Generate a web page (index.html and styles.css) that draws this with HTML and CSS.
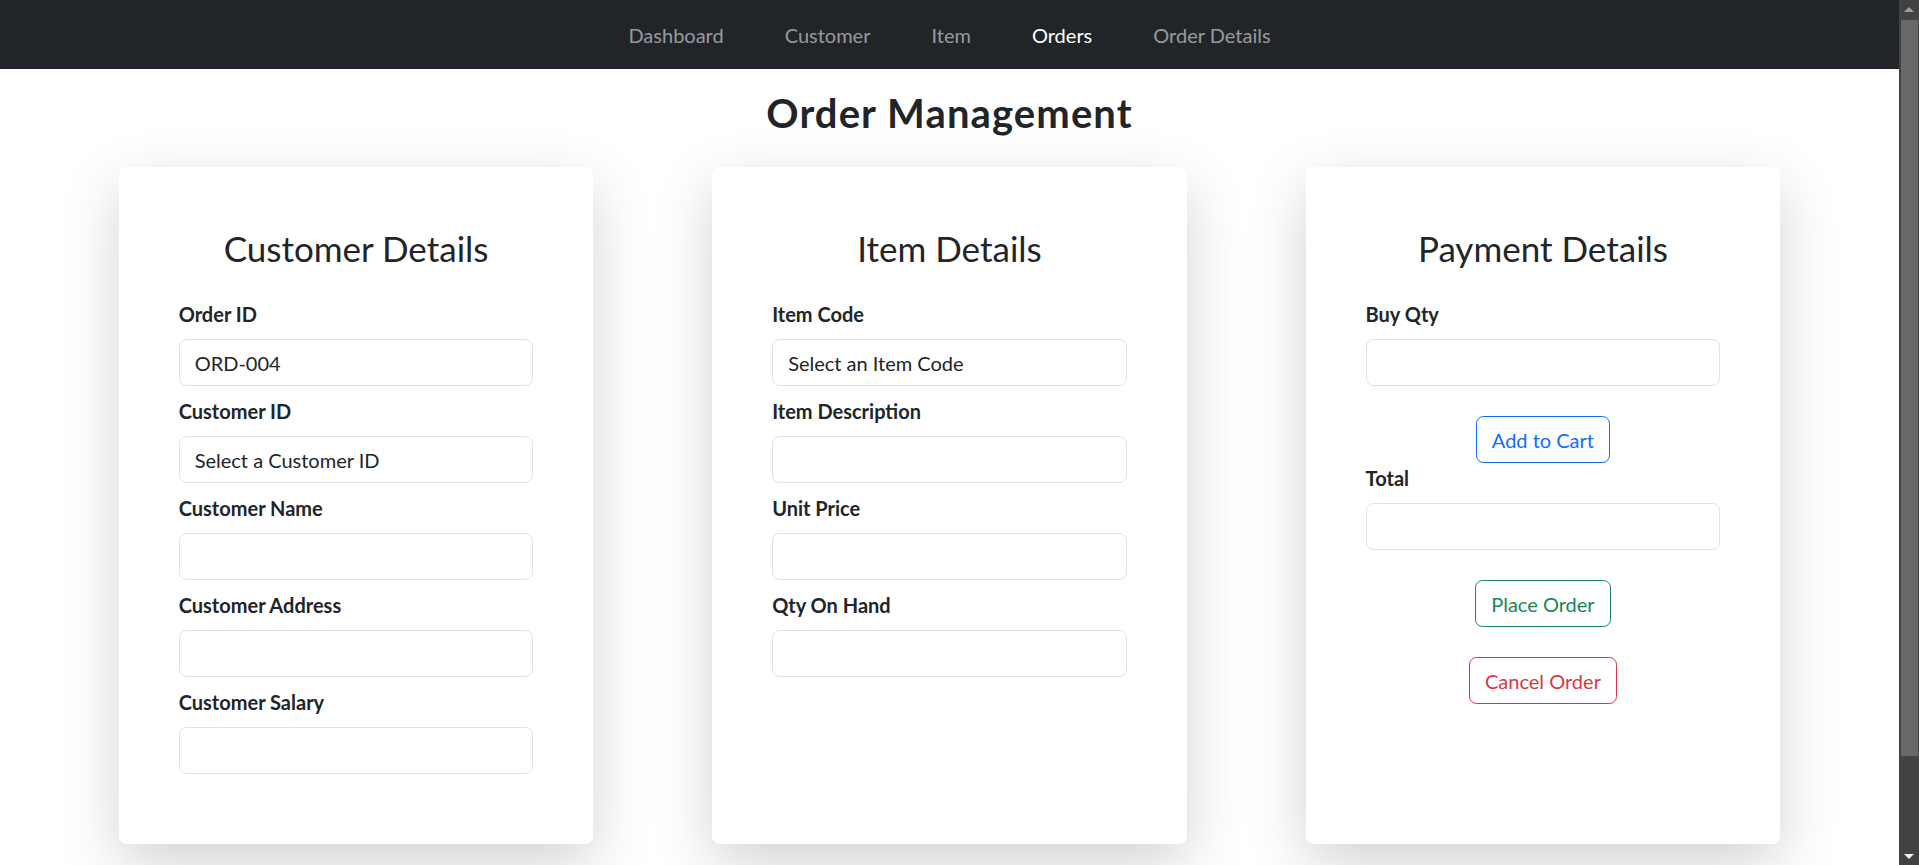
FILE: index.html
```html
<!DOCTYPE html>
<html lang="en">
<head>
<meta charset="utf-8">
<title>Order Management</title>
<link rel="stylesheet" href="styles.css">
</head>
<body>
<nav class="navbar">
  <ul class="nav-list">
    <li><a class="nav-link" href="#">Dashboard</a></li>
    <li><a class="nav-link" href="#">Customer</a></li>
    <li><a class="nav-link" href="#">Item</a></li>
    <li><a class="nav-link active" href="#">Orders</a></li>
    <li><a class="nav-link" href="#">Order Details</a></li>
  </ul>
</nav>
<main class="page">
  <h2 class="page-title">Order Management</h2>
  <div class="cards">
    <section class="card">
      <h3 class="card-title">Customer Details</h3>
      <div class="group"><label class="label">Order ID</label><input class="field" type="text" value="ORD-004"></div>
      <div class="group"><label class="label">Customer ID</label><select class="field"><option>Select a Customer ID</option></select></div>
      <div class="group"><label class="label">Customer Name</label><input class="field" type="text"></div>
      <div class="group"><label class="label">Customer Address</label><input class="field" type="text"></div>
      <div class="group"><label class="label">Customer Salary</label><input class="field" type="text"></div>
    </section>
    <section class="card">
      <h3 class="card-title">Item Details</h3>
      <div class="group"><label class="label">Item Code</label><select class="field"><option>Select an Item Code</option></select></div>
      <div class="group"><label class="label">Item Description</label><input class="field" type="text"></div>
      <div class="group"><label class="label">Unit Price</label><input class="field" type="text"></div>
      <div class="group"><label class="label">Qty On Hand</label><input class="field" type="text"></div>
    </section>
    <section class="card">
      <h3 class="card-title">Payment Details</h3>
      <div class="group"><label class="label">Buy Qty</label><input class="field" type="text"></div>
      <div class="btn-row"><button class="btn btn-primary" type="button">Add to Cart</button></div>
      <div class="group"><label class="label">Total</label><input class="field" type="text"></div>
      <div class="btn-row"><button class="btn btn-success" type="button">Place Order</button></div>
      <div class="btn-row btn-row-last"><button class="btn btn-danger" type="button">Cancel Order</button></div>
    </section>
  </div>
</main>
<div class="scrollbar" aria-hidden="true">
  <span class="sb-arrow sb-up"></span>
  <span class="sb-thumb"></span>
  <span class="sb-arrow sb-down"></span>
</div>
</body>
</html>
```
FILE: styles.css
```css
* { box-sizing: border-box; }
html, body { margin: 0; padding: 0; }
body {
  font-family: Lato, "Open Sans", sans-serif;
  font-size: 20px;
  line-height: 1.5;
  color: #212529;
  background: #fff;
  padding-right: 20px;
}
.navbar {
  background: #212529;
  height: 69px;
  display: flex;
  align-items: center;
  justify-content: center;
}
.nav-list {
  list-style: none;
  margin: 0;
  padding: 0;
  display: flex;
  gap: 61px;
}
.nav-link {
  display: block;
  color: rgba(255, 255, 255, 0.55);
  text-decoration: none;
  line-height: 30px;
}
.nav-link.active { color: #fff; }
.page { padding-bottom: 132px; }
.page-title {
  margin: 20px 0 30px;
  text-align: center;
  font-size: 40px;
  font-weight: 700;
  line-height: 1.2;
  letter-spacing: 1.1px;
}
.cards {
  display: flex;
  justify-content: space-evenly;
  align-items: stretch;
}
.card {
  width: 25%;
  background: #fff;
  border-radius: 7.5px;
  padding: 60px;
  box-shadow: 0 20px 60px rgba(0, 0, 0, 0.175);
}
.card-title {
  margin: 0 0 30px;
  text-align: center;
  font-size: 35px;
  font-weight: 400;
  line-height: 1.2;
}
.group { margin-bottom: 10px; }
.label {
  display: block;
  font-weight: 700;
  margin-bottom: 10px;
}
.field {
  display: block;
  width: 100%;
  height: 47px;
  padding: 7.5px 15px;
  font: inherit;
  font-size: 20px;
  line-height: 30px;
  color: #212529;
  background: #fff;
  border: 1px solid #dee2e6;
  border-radius: 7.5px;
  appearance: none;
  -webkit-appearance: none;
  outline: none;
}
.btn-row {
  text-align: center;
  padding-top: 20px;
}
.btn-row-last { padding-top: 30px; }
.btn {
  display: inline-block;
  font: inherit;
  font-size: 20px;
  line-height: 30px;
  padding: 7.5px 15px;
  background: transparent;
  border: 1px solid;
  border-radius: 7.5px;
  cursor: pointer;
}
.btn-primary { color: #0d6efd; border-color: #0d6efd; }
.btn-success { color: #198754; border-color: #198754; }
.btn-danger { color: #dc3545; border-color: #dc3545; }

.scrollbar {
  position: fixed;
  top: 0;
  right: 0;
  bottom: 0;
  width: 20px;
  background: #424242;
}
.sb-thumb {
  position: absolute;
  top: 20px;
  left: 2px;
  right: 1px;
  height: 736px;
  background: #686868;
}
.sb-arrow {
  position: absolute;
  left: 5px;
  width: 0;
  height: 0;
  border-left: 5px solid transparent;
  border-right: 5px solid transparent;
}
.sb-up {
  top: 7px;
  border-bottom: 5px solid #9e9e9e;
}
.sb-down {
  bottom: 6px;
  border-top: 5px solid #f0f0f0;
}
```
